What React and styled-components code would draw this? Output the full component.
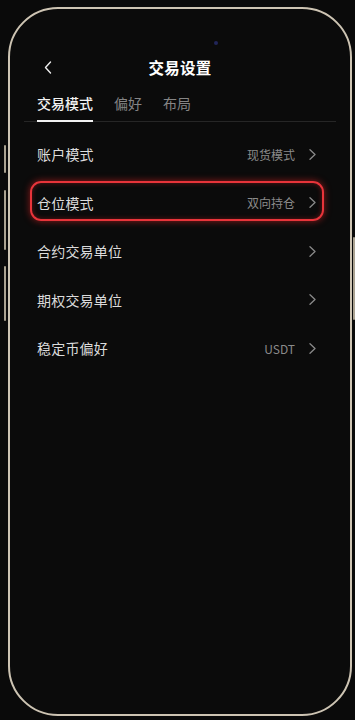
import React from "react";
import styled, { createGlobalStyle } from "styled-components";

const GlobalStyle = createGlobalStyle`
  html, body {
    margin: 0;
    padding: 0;
    background: #0a0a0a;
  }
  body {
    font-family: "Noto Sans CJK SC", "Noto Sans", "Liberation Sans", sans-serif;
  }
`;

const Page = styled.div`
  width: 355px;
  height: 720px;
  padding: 7px 3px 4px 8px;
  box-sizing: border-box;
  background: #0a0a0a;
`;

const Frame = styled.div`
  position: relative;
  width: 100%;
  height: 100%;
  box-sizing: border-box;
  border: 2px solid #cdc4b3;
  border-radius: 50px;
  background: #0b0b0b;
`;

// hardware keys sitting on the outside of the frame
const SideButton = styled.div`
  position: absolute;
  width: 2px;
  border-radius: 1px;
  background: #aaa291;
  top: ${(p) => p.top}px;
  height: ${(p) => p.h}px;
  ${(p) => (p.right ? "right: -5px;" : "left: -6px;")}
`;

const Camera = styled.div`
  position: absolute;
  left: 204px;
  top: 32px;
  width: 4px;
  height: 4px;
  border-radius: 50%;
  background: #22265a;
`;

const Screen = styled.div`
  display: flex;
  flex-direction: column;
  padding: 46px 14px 0;
`;

const Header = styled.div`
  height: 24px;
  display: grid;
  grid-template-columns: 1fr auto 1fr;
  align-items: center;
  padding-left: 20px;
`;

const BackButton = styled.div`
  display: flex;
  align-items: center;
`;

const Title = styled.div`
  color: #ffffff;
  font-size: 15.5px;
  font-weight: 700;
  letter-spacing: 0.3px;
  margin-right: 20px;
`;

const TabBar = styled.div`
  margin-top: 14px;
  display: flex;
  gap: 21px;
  padding-left: 13px;
  border-bottom: 1px solid #262626;
`;

const Tab = styled.div`
  font-size: 14px;
  line-height: 20px;
  padding-bottom: 7px;
  margin-bottom: -1px;
  color: ${(p) => (p.active ? "#f2f2f2" : "#858585")};
  font-weight: ${(p) => (p.active ? 500 : 400)};
  border-bottom: 2px solid ${(p) => (p.active ? "#f2f2f2" : "transparent")};
`;

const List = styled.div`
  display: flex;
  flex-direction: column;
  padding-top: 8px;
`;

const Row = styled.div`
  position: relative;
  height: 48.5px;
  display: flex;
  align-items: center;
  justify-content: space-between;
  padding: 0 20px 0 13px;

  ${(p) =>
    p.highlighted &&
    `
    &::after {
      content: "";
      position: absolute;
      left: 6px;
      right: 12px;
      top: 2.5px;
      height: 40px;
      box-sizing: border-box;
      border: 2.5px solid #e8343a;
      border-radius: 11px;
      box-shadow: 0 0 7px rgba(255, 40, 40, 0.55), inset 0 0 5px rgba(255, 40, 40, 0.35);
    }
  `}
`;

const Label = styled.div`
  color: #dcdcdc;
  font-size: 14px;
  letter-spacing: 0.2px;
`;

const Right = styled.div`
  display: flex;
  align-items: center;
  gap: 14px;
`;

const Value = styled.div`
  color: #8a8a8a;
  font-size: 12px;
`;

const Chevron = ({ color = "#8a8a8a" }) => (
  <svg width="7" height="11" viewBox="0 0 7 11" fill="none">
    <path d="M1 0.8l5 4.7-5 4.7" stroke={color} strokeWidth="1.3" strokeLinecap="round" strokeLinejoin="round" />
  </svg>
);

const rows = [
  { label: "账户模式", value: "现货模式" },
  { label: "仓位模式", value: "双向持仓", highlighted: true },
  { label: "合约交易单位" },
  { label: "期权交易单位" },
  { label: "稳定币偏好", value: "USDT" },
];

export default function App() {
  return (
    <Page>
      <GlobalStyle />
      <Frame>
        <SideButton top={136} h={28} />
        <SideButton top={181} h={60} />
        <SideButton top={257} h={55} />
        <SideButton right top={228} h={83} />
        <Camera />
        <Screen>
          <Header>
            <BackButton>
              <svg width="8" height="13" viewBox="0 0 8 13" fill="none">
                <path d="M6.5 1L1.5 6.5l5 5.5" stroke="#eeeeee" strokeWidth="1.4" strokeLinecap="round" strokeLinejoin="round" />
              </svg>
            </BackButton>
            <Title>交易设置</Title>
            <span />
          </Header>
          <TabBar>
            <Tab active>交易模式</Tab>
            <Tab>偏好</Tab>
            <Tab>布局</Tab>
          </TabBar>
          <List>
            {rows.map((r) => (
              <Row key={r.label} highlighted={r.highlighted}>
                <Label>{r.label}</Label>
                <Right>
                  {r.value && <Value>{r.value}</Value>}
                  <Chevron />
                </Right>
              </Row>
            ))}
          </List>
        </Screen>
      </Frame>
    </Page>
  );
}
